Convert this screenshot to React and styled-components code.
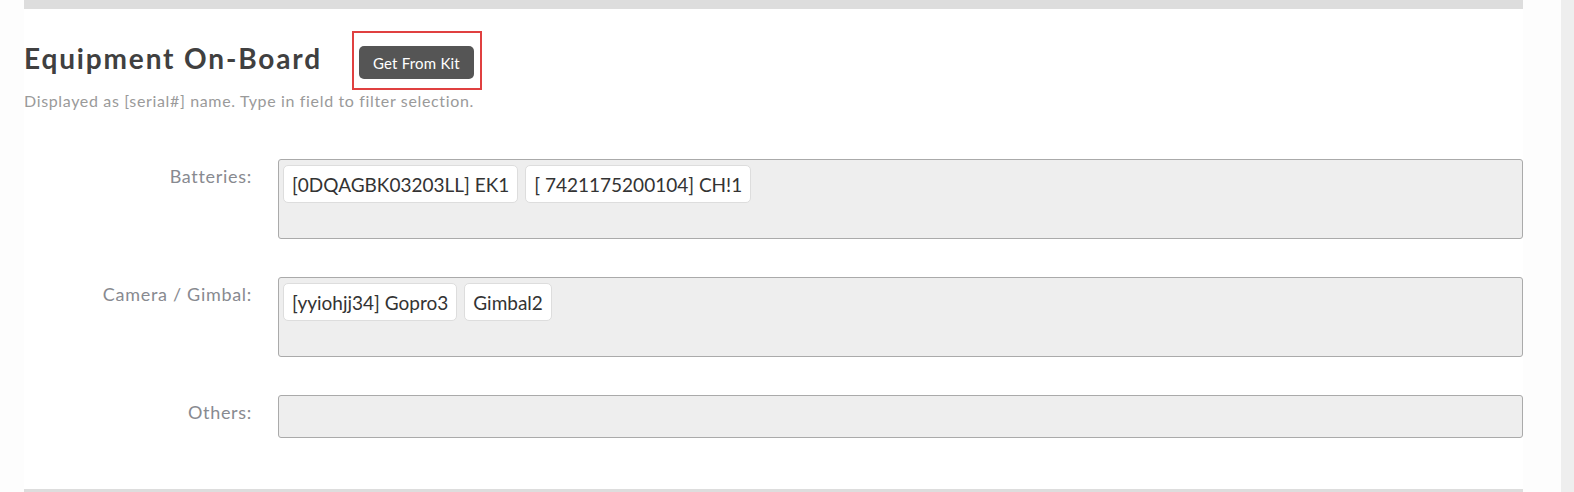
import React from "react";
import styled, { createGlobalStyle } from "styled-components";

const GlobalStyle = createGlobalStyle`
  html, body {
    margin: 0;
    padding: 0;
    background: #ffffff;
  }
  body {
    font-family: "Lato", "Noto Sans", sans-serif;
    color: #444;
  }
`;

const Page = styled.div`
  display: flex;
  width: 1574px;
  height: 492px;
  overflow: hidden;
`;

const Main = styled.div`
  flex: 1;
  padding: 0 38px 0 24px;
  background: #fdfdfd;
`;

const Track = styled.div`
  width: 13px;
  background: #eeeeee;
`;

const Section = styled.section`
  border-top: 9px solid #dddddd;
  border-bottom: 3px solid #dddddd;
  background: #ffffff;
  height: 480px;
`;

const Header = styled.div`
  display: flex;
  align-items: flex-start;
  gap: 30px;
  margin-top: 22px;
`;

const Title = styled.h2`
  margin: 13px 0 0;
  font-size: 28px;
  line-height: 28px;
  font-weight: 700;
  color: #404040;
  letter-spacing: 1.85px;
`;

const Highlight = styled.div`
  border: 2px solid #e04040;
  padding: 13px 6px 9px 5px;
`;

const Button = styled.button`
  width: 115px;
  height: 33px;
  border: none;
  border-radius: 5px;
  background: #555555;
  color: #ffffff;
  font-family: "Lato", sans-serif;
  font-size: 15px;
  letter-spacing: 0.2px;
  cursor: pointer;
`;

const Hint = styled.p`
  margin: 2px 0 0;
  font-size: 16px;
  line-height: 18px;
  letter-spacing: 0.65px;
  color: #9a9a9a;
`;

const Fields = styled.div`
  display: grid;
  grid-template-columns: 228px 1fr;
  column-gap: 26px;
  row-gap: 38px;
  margin-top: 49px;
`;

const Label = styled.label`
  text-align: right;
  font-size: 18px;
  line-height: 22px;
  letter-spacing: 0.7px;
  padding-top: 6px;
  color: #888a90;
`;

const TagBox = styled.div`
  display: flex;
  flex-wrap: wrap;
  align-content: flex-start;
  gap: 7px;
  box-sizing: border-box;
  height: ${(p) => p.$height}px;
  padding: 5px 4px;
  background: #eeeeee;
  border: 1px solid #aaaaaa;
  border-radius: 3px;
`;

const Tag = styled.span`
  display: inline-flex;
  align-items: center;
  height: 38px;
  box-sizing: border-box;
  padding: 0 8px;
  background: #ffffff;
  border: 1px solid #dddddd;
  border-radius: 5px;
  font-size: 19px;
  color: #333333;
  white-space: nowrap;
`;

const fields = [
  {
    label: "Batteries:",
    height: 80,
    tags: ["[0DQAGBK03203LL] EK1", "[ 7421175200104] CH!1"],
  },
  {
    label: "Camera / Gimbal:",
    height: 80,
    tags: ["[yyiohjj34] Gopro3", "Gimbal2"],
  },
  { label: "Others:", height: 43, tags: [] },
];

export default function App() {
  return (
    <>
      <GlobalStyle />
      <Page>
        <Main>
          <Section>
            <Header>
              <Title>Equipment On-Board</Title>
              <Highlight>
                <Button>Get From Kit</Button>
              </Highlight>
            </Header>
            <Hint>Displayed as [serial#] name. Type in field to filter selection.</Hint>
            <Fields>
              {fields.map((f) => (
                <React.Fragment key={f.label}>
                  <Label>{f.label}</Label>
                  <TagBox $height={f.height}>
                    {f.tags.map((t) => (
                      <Tag key={t}>{t}</Tag>
                    ))}
                  </TagBox>
                </React.Fragment>
              ))}
            </Fields>
          </Section>
        </Main>
        <Track />
      </Page>
    </>
  );
}
